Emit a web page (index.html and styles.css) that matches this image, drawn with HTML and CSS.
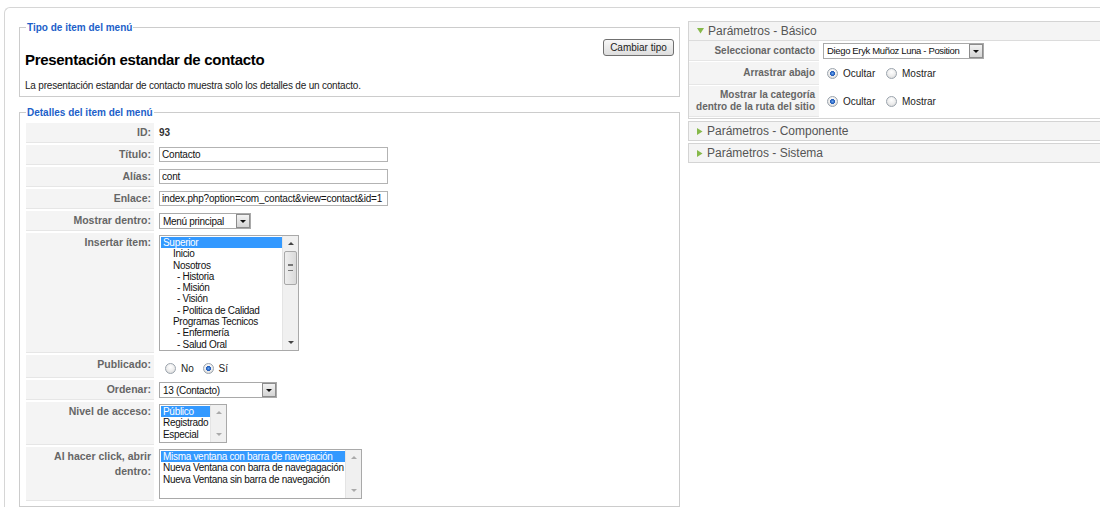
FILE: index.html
```html
<!DOCTYPE html>
<html lang="es">
<head>
<meta charset="utf-8"/>
<title>Editar item del menú</title>
<link rel="stylesheet" href="styles.css">
</head>
<body>
<div class="page">
    <div class="col-left">
        <fieldset class="box">
            <legend>Tipo de item del menú</legend>
            <button class="btn" type="button">Cambiar tipo</button>
            <h2 class="type-title">Presentación estandar de contacto</h2>
            <p class="type-desc">La presentación estandar de contacto muestra solo los detalles de un contacto.</p>
        </fieldset>

        <fieldset class="box details">
            <legend>Detalles del item del menú</legend>
            <table class="admintable">
                <tr>
                    <td class="key">ID:</td>
                    <td><b class="item-id">93</b></td>
                </tr>
                <tr>
                    <td class="key">Título:</td>
                    <td><input class="text" type="text" value="Contacto"/></td>
                </tr>
                <tr>
                    <td class="key">Alías:</td>
                    <td><input class="text" type="text" value="cont"/></td>
                </tr>
                <tr>
                    <td class="key">Enlace:</td>
                    <td><input class="text" type="text" value="index.php?option=com_contact&amp;view=contact&amp;id=1"/></td>
                </tr>
                <tr>
                    <td class="key">Mostrar dentro:</td>
                    <td><span class="select sel-menu"><span class="sel-text">Menú principal</span><span class="sel-btn"></span></span></td>
                </tr>
                <tr>
                    <td class="key">Insertar ítem:</td>
                    <td>
                        <div class="listbox lb-parent">
                            <ul class="options">
                                <li class="selected">Superior</li>
                                <li class="l1">Inicio</li>
                                <li class="l1">Nosotros</li>
                                <li class="l2">- Historia</li>
                                <li class="l2">- Misión</li>
                                <li class="l2">- Visión</li>
                                <li class="l2">- Politica de Calidad</li>
                                <li class="l1">Programas Tecnicos</li>
                                <li class="l2">- Enfermería</li>
                                <li class="l2">- Salud Oral</li>
                            </ul>
                            <div class="scroll">
                                <span class="arrow up"></span>
                                <span class="thumb"></span>
                                <span class="track"></span>
                                <span class="arrow down"></span>
                            </div>
                        </div>
                    </td>
                </tr>
                <tr>
                    <td class="key">Publicado:</td>
                    <td class="radio-cell">
                        <span class="radio"></span><span class="opt">No</span>
                        <span class="radio on"></span><span class="opt">Sí</span>
                    </td>
                </tr>
                <tr>
                    <td class="key">Ordenar:</td>
                    <td><span class="select sel-order"><span class="sel-text">13 (Contacto)</span><span class="sel-btn"></span></span></td>
                </tr>
                <tr>
                    <td class="key">Nivel de acceso:</td>
                    <td>
                        <div class="listbox lb-access">
                            <ul class="options">
                                <li class="selected">Público</li>
                                <li>Registrado</li>
                                <li>Especial</li>
                            </ul>
                            <div class="scroll disabled">
                                <span class="arrow up"></span>
                                <span class="track"></span>
                                <span class="arrow down"></span>
                            </div>
                        </div>
                    </td>
                </tr>
                <tr>
                    <td class="key">Al hacer click, abrir<br/>dentro:</td>
                    <td>
                        <div class="listbox lb-target">
                            <ul class="options">
                                <li class="selected">Misma ventana con barra de navegación</li>
                                <li>Nueva Ventana con barra de navegagación</li>
                                <li>Nueva Ventana sin barra de navegación</li>
                            </ul>
                            <div class="scroll disabled">
                                <span class="arrow up"></span>
                                <span class="track"></span>
                                <span class="arrow down"></span>
                            </div>
                        </div>
                    </td>
                </tr>
            </table>
        </fieldset>
    </div>

    <div class="col-right">
        <div class="panel open">
            <div class="panel-head">
                <svg class="toggle" width="7" height="6" viewBox="0 0 7 6"><polygon points="0,0 7,0 3.5,5.5"/></svg>
                <span>Parámetros - Básico</span>
            </div>
            <table class="params">
                <tr>
                    <td class="key">Seleccionar contacto</td>
                    <td><span class="select sel-contact"><span class="sel-text">Diego Eryk Muñoz Luna - Position</span><span class="sel-btn"></span></span></td>
                </tr>
                <tr class="row-radio">
                    <td class="key">Arrastrar abajo</td>
                    <td>
                        <span class="radio on"></span><span class="opt">Ocultar</span>
                        <span class="radio"></span><span class="opt">Mostrar</span>
                    </td>
                </tr>
                <tr class="row-tall">
                    <td class="key">Mostrar la categoría<br/>dentro de la ruta del sitio</td>
                    <td>
                        <span class="radio on"></span><span class="opt">Ocultar</span>
                        <span class="radio"></span><span class="opt">Mostrar</span>
                    </td>
                </tr>
            </table>
        </div>
        <div class="panel">
            <div class="panel-head">
                <svg class="toggle" width="6" height="7" viewBox="0 0 6 7"><polygon points="0,0 5.5,3.5 0,7"/></svg>
                <span>Parámetros - Componente</span>
            </div>
        </div>
        <div class="panel">
            <div class="panel-head">
                <svg class="toggle" width="6" height="7" viewBox="0 0 6 7"><polygon points="0,0 5.5,3.5 0,7"/></svg>
                <span>Parámetros - Sistema</span>
            </div>
        </div>
    </div>
</div>
</body>
</html>
```
FILE: styles.css
```css
html, body {
    margin: 0;
    height: 100%;
    overflow: hidden;
    background: #fff;
}
body {
    font-family: "Liberation Sans", Arial, sans-serif;
    font-size: 10px;
    color: #333;
}

/* outer rounded box */
.page {
    display: flex;
    gap: 8px;
    margin: 7px -20px 0 4px;
    padding: 13px 0 0 14px;
    border: 1px solid #d6d6d6;
    border-right: 0;
    border-bottom: 0;
    border-radius: 6px 0 0 0;
    min-height: 600px;
}
.col-left {
    width: 661px;
    flex: none;
}
.col-right {
    flex: 1;
}

/* fieldsets */
fieldset.box {
    margin: 0;
    padding: 5px 6px 4px;
    border: 1px solid #ccc;
    min-width: 0;
}
fieldset.box legend {
    padding: 0 1px;
    font-size: 10px;
    font-weight: bold;
    line-height: 13px;
    color: #1d5fc9;
}
fieldset.details {
    margin-top: 9px;
    padding: 2px 6px 3px;
}
.btn {
    float: right;
    width: 71px;
    height: 17px;
    margin: 0 -1px 0 0;
    padding: 0;
    font: 10px "Liberation Sans", Arial, sans-serif;
    color: #222;
    border: 1px solid #707070;
    border-radius: 3px;
    background: linear-gradient(#f7f7f7, #dddddd);
}
.type-title {
    margin: 12px 0 0 -1px;
    font-size: 15px;
    line-height: 18px;
    letter-spacing: -0.3px;
    color: #000;
}
.type-desc {
    margin: 10px 0 0 -1px;
    line-height: 13px;
    letter-spacing: -0.2px;
    color: #222;
}

/* form table */
.admintable {
    border-collapse: separate;
    border-spacing: 0 2px;
}
.admintable td {
    padding: 2px 4px 2px 5px;
    line-height: 15px;
    vertical-align: top;
}
.admintable td.key,
.params td.key {
    background: #f4f4f4;
    border-bottom: 1px solid #e6e6e6;
    text-align: right;
    font-weight: bold;
    color: #666;
}
.admintable td.key {
    width: 121px;
    padding: 2px 3px 2px 4px;
    font-size: 10.5px;
}
.item-id {
    color: #333;
}
input.text {
    display: block;
    width: 229px;
    height: 15px;
    box-sizing: border-box;
    margin: 0;
    padding: 0 2px;
    border: 1px solid #b3b3b3;
    font: 10px "Liberation Sans", Arial, sans-serif;
    letter-spacing: -0.2px;
    color: #111;
}
.admintable td.radio-cell {
    padding-top: 6px;
}

/* fake dropdowns */
.select {
    display: flex;
    align-items: center;
    height: 16px;
    box-sizing: border-box;
    border: 1px solid #a9a9a9;
    background: #fff;
}
.sel-text {
    flex: 1;
    padding-left: 3px;
    letter-spacing: -0.3px;
    color: #111;
    white-space: nowrap;
    overflow: hidden;
}
.sel-btn {
    position: relative;
    width: 14px;
    height: 14px;
    box-sizing: border-box;
    border: 1px solid #8c8c8c;
    background: linear-gradient(#f2f2f2, #d4d4d4);
}
.sel-btn::after {
    content: "";
    position: absolute;
    left: 3px;
    top: 5px;
    border-left: 3px solid transparent;
    border-right: 3px solid transparent;
    border-top: 3px solid #111;
}
.sel-menu { width: 92px; }
.sel-order { width: 118px; }
.sel-contact { width: 161px; }
.sel-contact .sel-text {
    font-size: 9.5px;
    letter-spacing: -0.35px;
}

/* fake list boxes */
.listbox {
    display: flex;
    box-sizing: border-box;
    border: 1px solid #a9a9a9;
    background: #fff;
    padding: 1px 0 1px 1px;
}
.options {
    flex: 1;
    margin: 0;
    padding: 0;
    list-style: none;
}
.options li {
    height: 11.3px;
    line-height: 11px;
    padding-left: 2px;
    letter-spacing: -0.3px;
    color: #111;
    white-space: nowrap;
}
.options li.selected {
    background: #3399ff;
    color: #fff;
}
.options li.l1 { padding-left: 12px; }
.options li.l2 { padding-left: 16px; }
.lb-parent { width: 140px; height: 116px; }
.lb-access { width: 68px; height: 39px; }
.lb-target { width: 203px; height: 50px; }

.scroll {
    display: flex;
    flex-direction: column;
    width: 15px;
    margin: -1px 0;
    background: #f0f0f0;
    border-left: 1px solid #e4e4e4;
}
.scroll .arrow {
    position: relative;
    height: 15px;
}
.scroll .arrow::after {
    content: "";
    position: absolute;
    left: 5px;
    top: 6px;
    border-left: 3px solid transparent;
    border-right: 3px solid transparent;
}
.scroll .up::after { border-bottom: 3px solid #444; }
.scroll .down::after { border-top: 3px solid #444; }
.scroll.disabled .up::after { border-bottom-color: #aaa; }
.scroll.disabled .down::after { border-top-color: #aaa; }
.scroll .thumb {
    position: relative;
    height: 32px;
    margin: 0 1px;
    border: 1px solid #a8a8a8;
    border-radius: 2px;
    background: linear-gradient(90deg, #eeeeee, #dadada);
}
.scroll .thumb::after {
    content: "";
    position: absolute;
    left: 3px;
    top: 12px;
    width: 5px;
    height: 5px;
    border-top: 1px solid #777;
    border-bottom: 1px solid #777;
    box-shadow: inset 0 2px 0 -1px #777;
}
.scroll .track {
    flex: 1;
}

/* radios */
.radio {
    display: inline-block;
    width: 11px;
    height: 11px;
    box-sizing: border-box;
    margin-left: 6px;
    border: 1px solid #9ba4ad;
    border-radius: 50%;
    vertical-align: -2px;
    background: radial-gradient(circle at 50% 35%, #fff 0, #ececec 55%, #cfcfcf 100%);
}
.radio.on {
    background:
        radial-gradient(circle, #6aa6f0 0, #1d58b8 2.2px, transparent 2.8px),
        radial-gradient(circle at 50% 35%, #fff 0, #ececec 55%, #cfcfcf 100%);
}
.opt {
    margin-left: 5px;
    color: #222;
}

/* parameter panels */
.panel {
    border: 1px solid #d4d4d4;
    margin-bottom: 2px;
    background: #fff;
}
.panel-head {
    display: flex;
    align-items: center;
    gap: 4px;
    height: 18px;
    padding-left: 8px;
    background: #f4f4f4;
    font-size: 12px;
    color: #555;
}
.panel.open .panel-head {
    border-bottom: 1px solid #dcdcdc;
}
.toggle {
    fill: #86b94a;
}
.params {
    border-collapse: separate;
    border-spacing: 0 1px;
    margin-top: -1px;
}
.params td {
    padding: 2px 4px;
    line-height: 12px;
    vertical-align: middle;
}
.params td.key {
    width: 122px;
}
.params .row-radio td {
    padding-top: 5px;
    padding-bottom: 5px;
}
.params .row-tall td {
    padding-top: 3px;
    padding-bottom: 3px;
}
.params .radio {
    margin-left: 4px;
}
.params .opt + .radio {
    margin-left: 8px;
}
```
